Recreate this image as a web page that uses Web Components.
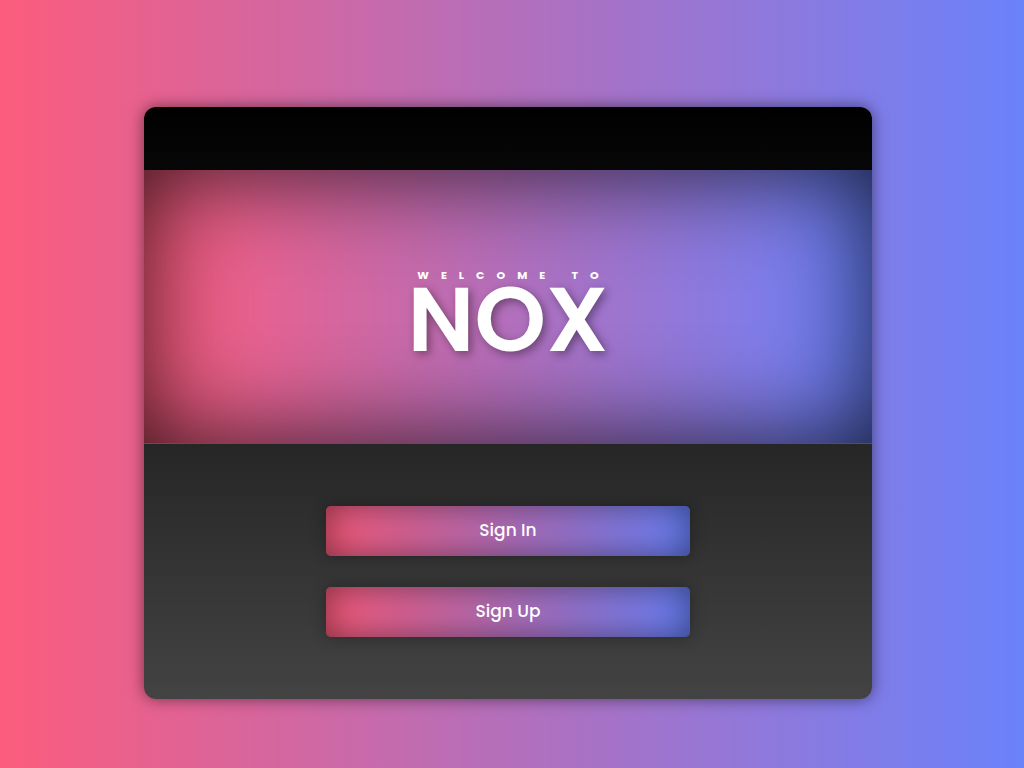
<!DOCTYPE html>
<html lang="en">
<head>
<meta charset="utf-8">
<meta name="viewport" content="width=device-width, initial-scale=1">
<title>NOX</title>
<style>
  html { height: 100%; }
  body {
    margin: 0;
    min-height: 100%;
    --brand: linear-gradient(to right, #fc5c7d, #6a82fb);
    background: var(--brand);
    font-family: Poppins, Inter, "Liberation Sans", sans-serif;
    color: #fff;
  }
</style>
</head>
<body>
<nox-page>
  <nox-card>
    <nox-banner slot="banner" lead="WELCOME TO">NOX</nox-banner>
    <nox-button>Sign In</nox-button>
    <nox-button>Sign Up</nox-button>
  </nox-card>
</nox-page>

<template id="page">
  <style>
    :host {
      display: flex;
      align-items: center;
      justify-content: center;
      box-sizing: border-box;
      min-height: 100vh;
      padding: 38px 0 0;
    }
    main { width: 100%; display: flex; justify-content: center; padding-right: 8px; }
  </style>
  <main><slot></slot></main>
</template>

<template id="card">
  <style>
    :host {
      display: block;
      width: 71.6%;
      padding-top: 63px;
      overflow: hidden;
      border-radius: 12px;
      background: linear-gradient(to bottom, #000, #434343);
      box-shadow: 0 0 15px rgba(0, 0, 0, 0.5);
    }
    .actions {
      display: flex;
      flex-direction: column;
      align-items: center;
      gap: 31px;
      padding: 62px 0;
    }
  </style>
  <slot name="banner"></slot>
  <div class="actions"><slot></slot></div>
</template>

<template id="banner">
  <style>
    :host {
      display: flex;
      flex-direction: column;
      align-items: center;
      padding: 99px 0 86px;
      border-bottom: 1px solid rgba(0, 0, 0, 0.4);
      background: var(--brand);
      box-shadow: inset 0 0 100px rgba(0, 0, 0, 0.8);
    }
    p, h1 { margin: 0; }
    p { font-size: 11px; font-weight: 700; line-height: 12px; letter-spacing: 12px; padding-left: 12px; }
    h1 {
      font-size: 91px;
      font-weight: 600;
      line-height: 76px;
      text-shadow: 3px 3px 10px rgba(0, 0, 0, 0.4);
    }
  </style>
  <p></p>
  <h1><slot></slot></h1>
</template>

<template id="button">
  <style>
    :host { display: block; width: 50%; }
    button {
      display: block;
      width: 100%;
      height: 50px;
      padding: 0 0 2px;
      border: 0;
      border-radius: 5px;
      background: var(--brand);
      box-shadow: inset 0 0 36px rgba(0, 0, 0, 0.5), 0 0 15px rgba(0, 0, 0, 0.3);
      color: inherit;
      font: 500 17px/24px Poppins, Inter, sans-serif;
      cursor: pointer;
    }
  </style>
  <button type="button"><slot></slot></button>
</template>

<script>
  class Stamped extends HTMLElement {
    constructor() {
      super();
      const root = this.attachShadow({ mode: "open" });
      root.append(document.getElementById(this.constructor.template).content.cloneNode(true));
    }
  }
  customElements.define("nox-page", class extends Stamped { static template = "page"; });
  customElements.define("nox-card", class extends Stamped { static template = "card"; });
  customElements.define("nox-banner", class extends Stamped {
    static template = "banner";
    connectedCallback() {
      this.shadowRoot.querySelector("p").textContent = this.getAttribute("lead");
    }
  });
  customElements.define("nox-button", class extends Stamped { static template = "button"; });
</script>
</body>
</html>
